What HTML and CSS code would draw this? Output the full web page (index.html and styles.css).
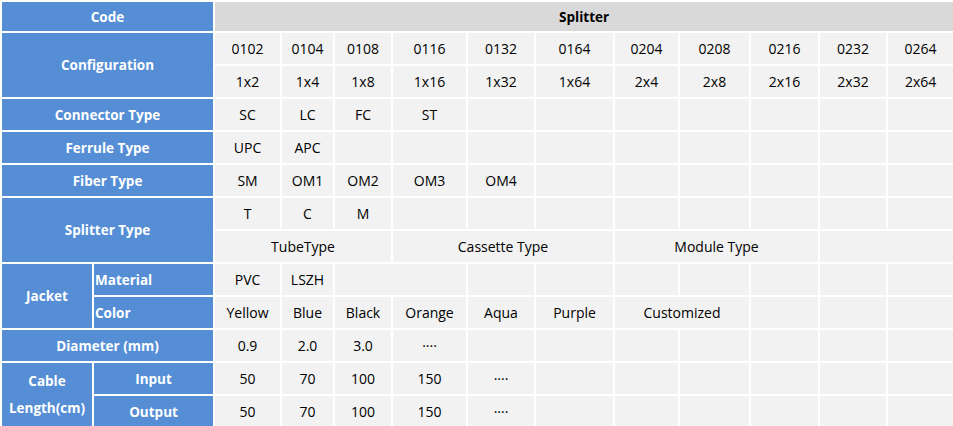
FILE: index.html
```html
<!DOCTYPE html>
<html>
<head>
<meta charset="utf-8">
<link rel="stylesheet" href="styles.css">
</head>
<body>
<table class="spec">
  <colgroup>
    <col class="c92"><col class="c121">
    <col class="c67"><col class="c53"><col class="c58"><col class="c75"><col class="c68"><col class="c79">
    <col class="c65"><col class="c71"><col class="c69"><col class="c68"><col class="c67">
  </colgroup>
  <tr class="r-head">
    <th class="lab" colspan="2">Code</th>
    <th class="top" colspan="11">Splitter</th>
  </tr>
  <tr>
    <th class="lab" colspan="2" rowspan="2">Configuration</th>
    <td>0102</td><td>0104</td><td>0108</td><td>0116</td><td>0132</td><td>0164</td><td>0204</td><td>0208</td><td>0216</td><td>0232</td><td>0264</td>
  </tr>
  <tr>
    <td>1x2</td><td>1x4</td><td>1x8</td><td>1x16</td><td>1x32</td><td>1x64</td><td>2x4</td><td>2x8</td><td>2x16</td><td>2x32</td><td>2x64</td>
  </tr>
  <tr>
    <th class="lab" colspan="2">Connector Type</th>
    <td>SC</td><td>LC</td><td>FC</td><td>ST</td><td></td><td></td><td></td><td></td><td></td><td></td><td></td>
  </tr>
  <tr>
    <th class="lab" colspan="2">Ferrule Type</th>
    <td>UPC</td><td>APC</td><td></td><td></td><td></td><td></td><td></td><td></td><td></td><td></td><td></td>
  </tr>
  <tr>
    <th class="lab" colspan="2">Fiber Type</th>
    <td>SM</td><td>OM1</td><td>OM2</td><td>OM3</td><td>OM4</td><td></td><td></td><td></td><td></td><td></td><td></td>
  </tr>
  <tr>
    <th class="lab" colspan="2" rowspan="2">Splitter Type</th>
    <td>T</td><td>C</td><td>M</td><td></td><td></td><td></td><td></td><td></td><td></td><td></td><td></td>
  </tr>
  <tr>
    <td colspan="3">TubeType</td><td colspan="3">Cassette Type</td><td colspan="3">Module Type</td><td colspan="2"></td>
  </tr>
  <tr>
    <th class="lab" rowspan="2">Jacket</th>
    <th class="lab sub">Material</th>
    <td>PVC</td><td>LSZH</td><td colspan="2"></td><td></td><td></td><td></td><td></td><td></td><td></td><td></td>
  </tr>
  <tr>
    <th class="lab sub">Color</th>
    <td>Yellow</td><td>Blue</td><td>Black</td><td>Orange</td><td>Aqua</td><td>Purple</td><td colspan="2">Customized</td><td></td><td></td><td></td>
  </tr>
  <tr>
    <th class="lab" colspan="2">Diameter (mm)</th>
    <td>0.9</td><td>2.0</td><td>3.0</td><td>····</td><td></td><td></td><td></td><td></td><td></td><td></td><td></td>
  </tr>
  <tr>
    <th class="lab cable" rowspan="2">Cable Length(cm)</th>
    <th class="lab">Input</th>
    <td>50</td><td>70</td><td>100</td><td>150</td><td>····</td><td></td><td></td><td></td><td></td><td></td><td></td>
  </tr>
  <tr>
    <th class="lab">Output</th>
    <td>50</td><td>70</td><td>100</td><td>150</td><td>····</td><td></td><td></td><td></td><td></td><td></td><td></td>
  </tr>
</table>
</body>
</html>
```

FILE: styles.css
```css
html, body {
  margin: 0;
  padding: 0;
  background: #ffffff;
}

.spec {
  width: 953px;
  table-layout: fixed;
  border-collapse: collapse;
  font-family: "Open Sans", "Noto Sans", sans-serif;
  font-size: 14px;
  color: #000;
}

.c92 { width: 92px; }
.c121 { width: 121px; }
.c67 { width: 67px; }
.c53 { width: 53px; }
.c58 { width: 58px; }
.c75 { width: 75px; }
.c68 { width: 68px; }
.c79 { width: 79px; }
.c65 { width: 65px; }
.c71 { width: 71px; }
.c69 { width: 69px; }

.spec tr {
  height: 33px;
}

.spec tr.r-head {
  height: 31px;
}

.spec th,
.spec td {
  border: 2px solid #ffffff;
  padding: 0;
  text-align: center;
  vertical-align: middle;
  background: #f2f2f2;
  white-space: nowrap;
  overflow: hidden;
  line-height: 18px;
}

.spec th.lab {
  background: #558ed5;
  color: #ffffff;
  font-weight: 700;
  font-size: 13.5px;
}

.spec th.top {
  background: #d9d9d9;
  color: #000;
  font-weight: 700;
  font-size: 13.5px;
}

.spec th.sub {
  text-align: left;
  padding-left: 1px;
}

.spec th.cable {
  white-space: normal;
  line-height: 27px;
}
```
